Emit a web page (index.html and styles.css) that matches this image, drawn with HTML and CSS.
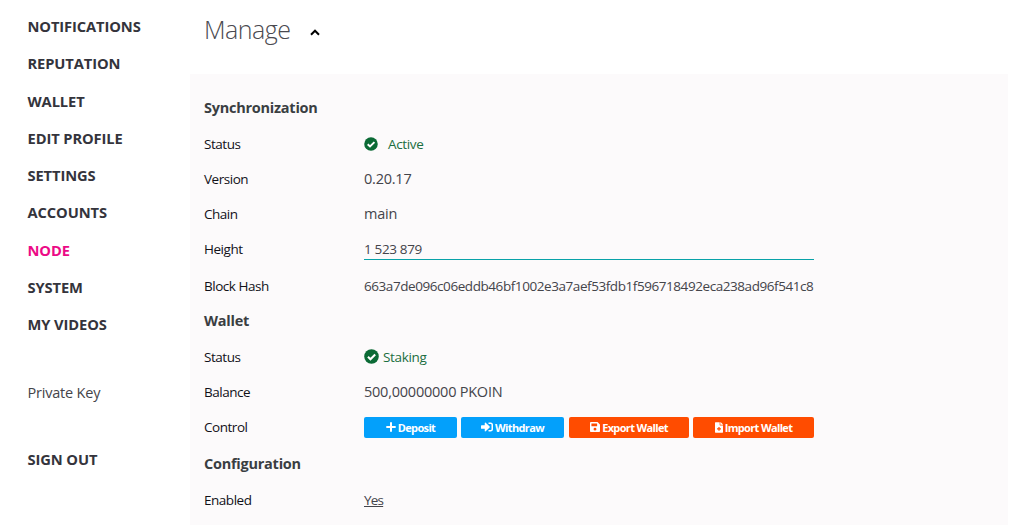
FILE: index.html
```html
<!DOCTYPE html>
<html lang="en">
<head>
<meta charset="utf-8">
<title>Node</title>
<link rel="stylesheet" href="styles.css">
</head>
<body>
<div class="app">
  <nav class="menu">
    <a class="item">NOTIFICATIONS</a>
    <a class="item">REPUTATION</a>
    <a class="item">WALLET</a>
    <a class="item">EDIT PROFILE</a>
    <a class="item">SETTINGS</a>
    <a class="item">ACCOUNTS</a>
    <a class="item active">NODE</a>
    <a class="item">SYSTEM</a>
    <a class="item">MY VIDEOS</a>
    <a class="item key">Private Key</a>
    <a class="item out">SIGN OUT</a>
  </nav>
  <main class="content">
    <header class="caption">
      <h1>Manage</h1>
      <svg class="chevron" viewBox="0 0 10 7"><path d="M1 5.7 5 1.7 9 5.7" fill="none" stroke="#000" stroke-width="2"/></svg>
    </header>
    <section class="panel">
      <h2>Synchronization</h2>
      <div class="row"><div class="label">Status</div><div class="value ok small"><svg class="check" viewBox="0 0 512 512"><circle cx="256" cy="256" r="248"/><path d="M135 265 220 348 382 186" fill="none" stroke="#fff" stroke-width="70"/></svg><span class="gap">Active</span></div></div>
      <div class="row"><div class="label">Version</div><div class="value">0.20.17</div></div>
      <div class="row"><div class="label">Chain</div><div class="value">main</div></div>
      <div class="row"><div class="label">Height</div><div class="value small lined">1 523 879</div></div>
      <div class="row hash"><div class="label">Block Hash</div><div class="value small digest">663a7de096c06eddb46bf1002e3a7aef53fdb1f596718492eca238ad96f541c8</div></div>
      <h2 class="mid">Wallet</h2>
      <div class="row"><div class="label">Status</div><div class="value ok small"><svg class="check big" viewBox="0 0 512 512"><circle cx="256" cy="256" r="248"/><path d="M135 265 220 348 382 186" fill="none" stroke="#fff" stroke-width="70"/></svg><span class="near">Staking</span></div></div>
      <div class="row"><div class="label">Balance</div><div class="value">500,00000000 PKOIN</div></div>
      <div class="row"><div class="label">Control</div><div class="value buttons">
        <button class="btn deposit"><svg viewBox="0 0 10 10"><path d="M5 .3V9.7M.3 5H9.7" stroke="#fff" stroke-width="2"/></svg>Deposit</button>
        <button class="btn withdraw"><svg class="wide" viewBox="0 0 512 512"><path d="M416 448h-84c-7 0-12-5-12-12v-40c0-7 5-12 12-12h84c18 0 32-14 32-32V160c0-18-14-32-32-32h-84c-7 0-12-5-12-12V76c0-7 5-12 12-12h84c53 0 96 43 96 96v192c0 53-43 96-96 96zM369 239 201 71c-15-15-41-5-41 17v96H24c-13 0-24 11-24 24v96c0 13 11 24 24 24h136v96c0 22 26 32 41 17l168-168c9-9 9-25 0-34z" fill="#fff"/></svg>Withdraw</button>
        <button class="btn export"><svg viewBox="0 0 448 448"><path fill="#fff" fill-rule="evenodd" d="M434 98 350 14c-9-9-21-14-34-14H48C22 0 0 22 0 48v352c0 27 22 48 48 48h352c27 0 48-21 48-48V132c0-13-5-25-14-34zM224 384a64 64 0 1 1 0-128 64 64 0 0 1 0 128zM320 180c0 7-5 12-12 12H76c-7 0-12-5-12-12V76c0-7 5-12 12-12h229l15 15z"/></svg>Export Wallet</button>
        <button class="btn import"><svg class="file" viewBox="0 0 384 512"><path fill="#fff" fill-rule="evenodd" d="M224 136V0H24C11 0 0 11 0 24v464c0 13 11 24 24 24h336c13 0 24-11 24-24V160H248c-13 0-24-11-24-24zm-62 90h60v64h64v60h-64v64h-60v-64H98v-60h64zM377 105 279 7c-5-5-11-7-17-7h-6v128h128v-6c0-6-3-12-7-17z"/></svg>Import Wallet</button>
      </div></div>
      <h2 class="last">Configuration</h2>
      <div class="row"><div class="label">Enabled</div><div class="value small"><span class="link">Yes</span></div></div>
    </section>
  </main>
</div>
</body>
</html>
```
FILE: styles.css
```css
* { box-sizing: border-box; }
body { margin: 0; background: #fff; color: #34343c; font-family: "Open Sans", "Noto Sans", sans-serif; overflow: hidden; }
.app { display: flex; width: 1029px; height: 525px; }
.menu { width: 190px; padding: 7.5px 0 0 27.5px; }
.item { display: flex; align-items: center; height: 37.25px; font-size: 14.7px; font-weight: 700; letter-spacing: -0.1px; white-space: nowrap; }
.item.active { color: #ec0a86; }
.item.key { margin-top: 31px; font-size: 14.5px; font-weight: 400; letter-spacing: -0.2px; color: #44444a; }
.item.out { margin-top: 29.5px; }
.content { width: 818px; }
.caption { display: flex; align-items: center; height: 74px; padding: 0 0 16px 14px; }
h1 { margin: 0; font-size: 25px; font-weight: 300; letter-spacing: -0.5px; color: #4a4a50; }
.chevron { width: 10px; height: 7px; margin: 7px 0 0 19.5px; }
.panel { height: 451px; padding: 15px 14px 0; background: #fcfafb; }
h2 { display: flex; align-items: center; height: 37px; margin: 0; font-size: 14.5px; font-weight: 700; letter-spacing: -0.25px; color: #3a3e42; }
h2.mid { height: 35px; padding-bottom: 2px; }
h2.last { height: 38px; }
.row { display: flex; height: 35px; }
.row.hash { height: 38px; padding-top: 1px; }
.label { display: flex; align-items: center; width: 160px; font-size: 13.5px; letter-spacing: -0.47px; color: #111118; }
.value { display: flex; align-items: center; width: 450px; font-size: 14.5px; letter-spacing: -0.23px; color: #44444a; white-space: nowrap; }
.value.small { font-size: 13.5px; letter-spacing: -0.35px; }
.value.digest { letter-spacing: -0.43px; }
.value.ok { color: #1b6e40; }
.check { width: 14px; height: 14px; fill: #0b6a35; }
.check.big { width: 15px; height: 15px; }
.gap { margin-left: 10px; }
.near { margin-left: 4px; }
.value.lined { height: 29px; padding-top: 7px; border-bottom: 1px solid #08a2a8; }
.buttons { gap: 4px; padding-top: 1px; }
.btn { display: flex; align-items: center; justify-content: center; height: 21px; padding: 0; border: 0; border-radius: 2px; color: #fff; font-family: inherit; font-size: 11px; font-weight: 700; letter-spacing: -0.65px; gap: 2px; }
.btn svg { width: 10px; height: 10px; }
.btn .wide { width: 12px; height: 12px; }
.btn .file { width: 8px; height: 11px; }
.deposit { width: 93px; background: #03a0fb; }
.withdraw { width: 103px; background: #03a0fb; }
.export { width: 120px; margin-left: 1px; background: #ff4c00; }
.import { width: 121px; background: #ff4c00; }
.link { text-decoration: underline; letter-spacing: -0.8px; }
```
